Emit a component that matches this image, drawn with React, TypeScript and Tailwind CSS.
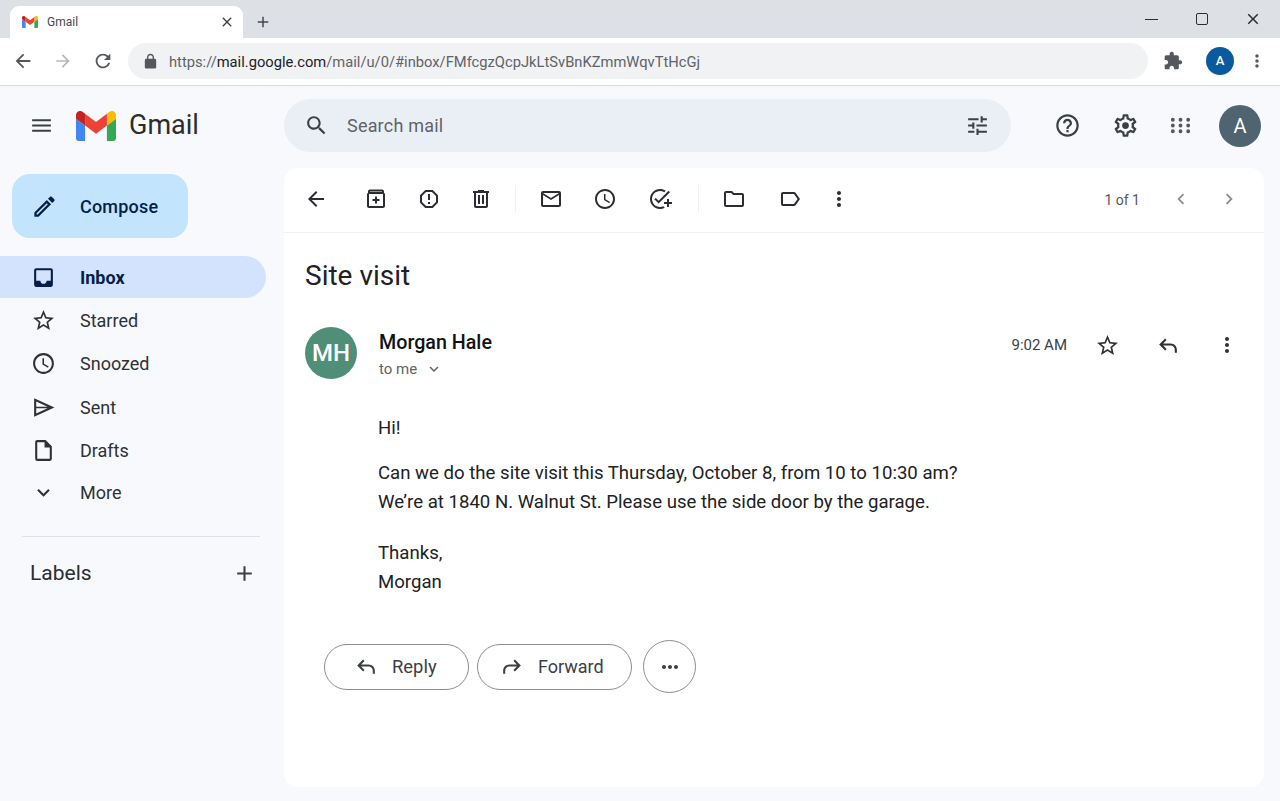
import React from 'react';

const paths = {
  menu: 'M3 18h18v-2H3v2zm0-5h18v-2H3v2zm0-7v2h18V6H3z',
  back: 'M20 11H7.83l5.59-5.59L12 4l-8 8 8 8 1.41-1.41L7.83 13H20v-2z',
  forward: 'M12 4l-1.41 1.41L16.17 11H4v2h12.17l-5.58 5.59L12 20l8-8z',
  refresh: 'M17.65 6.35C16.2 4.9 14.21 4 12 4c-4.42 0-7.99 3.58-7.99 8s3.57 8 7.99 8c3.73 0 6.84-2.55 7.73-6h-2.08c-.82 2.33-3.04 4-5.65 4-3.31 0-6-2.69-6-6s2.69-6 6-6c1.66 0 3.14.69 4.22 1.78L13 11h7V4l-2.35 2.35z',
  lock: 'M18 8h-1V6c0-2.76-2.24-5-5-5S7 3.24 7 6v2H6c-1.1 0-2 .9-2 2v10c0 1.1.9 2 2 2h12c1.1 0 2-.9 2-2V10c0-1.1-.9-2-2-2zM9 8V6c0-1.66 1.34-3 3-3s3 1.34 3 3v2H9z',
  puzzle: 'M20.5 11H19V7c0-1.1-.9-2-2-2h-4V3.5C13 2.12 11.88 1 10.5 1S8 2.12 8 3.5V5H4c-1.1 0-1.99.9-1.99 2v3.8H3.5c1.49 0 2.7 1.21 2.7 2.7s-1.21 2.7-2.7 2.7H2V20c0 1.1.9 2 2 2h3.8v-1.5c0-1.49 1.21-2.7 2.7-2.7 1.49 0 2.7 1.21 2.7 2.7V22H17c1.1 0 2-.9 2-2v-4h1.5c1.38 0 2.5-1.12 2.5-2.5S21.88 11 20.5 11z',
  moreVert: 'M12 8c1.1 0 2-.9 2-2s-.9-2-2-2-2 .9-2 2 .9 2 2 2zm0 2c-1.1 0-2 .9-2 2s.9 2 2 2 2-.9 2-2-.9-2-2-2zm0 6c-1.1 0-2 .9-2 2s.9 2 2 2 2-.9 2-2-.9-2-2-2z',
  close: 'M19 6.41L17.59 5 12 10.59 6.41 5 5 6.41 10.59 12 5 17.59 6.41 19 12 13.41 17.59 19 19 17.59 13.41 12z',
  add: 'M19 13h-6v6h-2v-6H5v-2h6V5h2v6h6v2z',
  search: 'M15.5 14h-.79l-.28-.27C15.41 12.59 16 11.11 16 9.5 16 5.91 13.09 3 9.5 3S3 5.91 3 9.5 5.91 16 9.5 16c1.61 0 3.09-.59 4.23-1.57l.27.28v.79l5 4.99L20.49 19l-4.99-5zm-6 0C7.01 14 5 11.99 5 9.5S7.01 5 9.5 5 14 7.01 14 9.5 11.99 14 9.5 14z',
  tune: 'M3 17v2h6v-2H3zM3 5v2h10V5H3zm10 16v-2h8v-2h-8v-2h-2v6h2zM7 9v2H3v2h4v2h2V9H7zm14 4v-2H11v2h10zm-6-4h2V7h4V5h-4V3h-2v6z',
  help: 'M11 18h2v-2h-2v2zm1-16C6.48 2 2 6.48 2 12s4.48 10 10 10 10-4.48 10-10S17.52 2 12 2zm0 18c-4.41 0-8-3.59-8-8s3.59-8 8-8 8 3.59 8 8-3.59 8-8 8zm0-14c-2.21 0-4 1.79-4 4h2c0-1.1.9-2 2-2s2 .9 2 2c0 2-3 1.75-3 5h2c0-2.25 3-2.5 3-5 0-2.21-1.79-4-4-4z',
  settings: 'M19.43 12.98c.04-.32.07-.64.07-.98 0-.34-.03-.66-.07-.98l2.11-1.65c.19-.15.24-.42.12-.64l-2-3.46c-.09-.16-.26-.25-.44-.25-.06 0-.12.01-.17.03l-2.49 1c-.52-.4-1.08-.73-1.69-.98l-.38-2.65C14.46 2.18 14.25 2 14 2h-4c-.25 0-.46.18-.49.42l-.38 2.65c-.61.25-1.17.59-1.69.98l-2.49-1c-.06-.02-.12-.03-.18-.03-.17 0-.34.09-.43.25l-2 3.46c-.13.22-.07.49.12.64l2.11 1.65c-.04.32-.07.65-.07.98 0 .33.03.66.07.98l-2.11 1.65c-.19.15-.24.42-.12.64l2 3.46c.09.16.26.25.44.25.06 0 .12-.01.17-.03l2.49-1c.52.4 1.08.73 1.69.98l.38 2.65c.03.24.24.42.49.42h4c.25 0 .46-.18.49-.42l.38-2.65c.61-.25 1.17-.59 1.69-.98l2.49 1c.06.02.12.03.18.03.17 0 .34-.09.43-.25l2-3.46c.12-.22.07-.49-.12-.64l-2.11-1.65zm-1.98-1.71c.04.31.05.52.05.73 0 .21-.02.43-.05.73l-.14 1.13.89.7 1.08.84-.7 1.21-1.27-.51-1.04-.42-.9.68c-.43.32-.84.56-1.25.73l-1.06.43-.16 1.13-.2 1.35h-1.4l-.19-1.35-.16-1.13-1.06-.43c-.43-.18-.83-.41-1.23-.71l-.91-.7-1.06.43-1.27.51-.7-1.21 1.08-.84.89-.7-.14-1.13c-.03-.31-.05-.54-.05-.74s.02-.43.05-.73l.14-1.13-.89-.7-1.08-.84.7-1.21 1.27.51 1.04.42.9-.68c.43-.32.84-.56 1.25-.73l1.06-.43.16-1.13.2-1.35h1.39l.19 1.35.16 1.13 1.06.43c.43.18.83.41 1.23.71l.91.7 1.06-.43 1.27-.51.7 1.21-1.07.85-.89.7.14 1.13zM12 9a3 3 0 1 0 0 6 3 3 0 0 0 0-6z',
  apps: 'M4 8a2 2 0 1 0 0-4 2 2 0 0 0 0 4zm8 0a2 2 0 1 0 0-4 2 2 0 0 0 0 4zm8 0a2 2 0 1 0 0-4 2 2 0 0 0 0 4zM4 14a2 2 0 1 0 0-4 2 2 0 0 0 0 4zm8 0a2 2 0 1 0 0-4 2 2 0 0 0 0 4zm8 0a2 2 0 1 0 0-4 2 2 0 0 0 0 4zM4 20a2 2 0 1 0 0-4 2 2 0 0 0 0 4zm8 0a2 2 0 1 0 0-4 2 2 0 0 0 0 4zm8 0a2 2 0 1 0 0-4 2 2 0 0 0 0 4z',
  pencil: 'M3 17.25V21h3.75L17.81 9.94l-3.75-3.75L3 17.25zM5.92 19H5v-.92l9.06-9.06.92.92L5.92 19zM20.71 5.63l-2.34-2.34c-.2-.2-.45-.29-.71-.29s-.51.1-.7.29l-1.83 1.83 3.75 3.75 1.83-1.83c.39-.39.39-1.02 0-1.41z',
  inbox: 'M19 3H4.99c-1.11 0-1.98.89-1.98 2L3 19c0 1.1.88 2 1.99 2H19c1.1 0 2-.9 2-2V5c0-1.11-.9-2-2-2zm0 12h-4c0 1.66-1.35 3-3 3s-3-1.34-3-3H4.99V5H19v10z',
  star: 'M22 9.24l-7.19-.62L12 2 9.19 8.63 2 9.24l5.46 4.73L5.82 21 12 17.27 18.18 21l-1.63-7.03L22 9.24zM12 15.4l-3.76 2.27 1-4.28-3.32-2.88 4.38-.38L12 6.1l1.71 4.04 4.38.38-3.32 2.88 1 4.28L12 15.4z',
  clock: 'M11.99 2C6.47 2 2 6.48 2 12s4.47 10 9.99 10C17.52 22 22 17.52 22 12S17.52 2 11.99 2zM12 20c-4.42 0-8-3.58-8-8s3.58-8 8-8 8 3.58 8 8-3.58 8-8 8zm.5-13H11v6l5.25 3.15.75-1.23-4.5-2.67z',
  send: 'M3 3.200L22.500 12 3 20.800V3.200zM5 6.300V11.200h10.900L5 6.300zM5 12.800v4.900l10.900-4.900H5z',
  draft: 'M14 2H6c-1.1 0-1.99.9-1.99 2L4 20c0 1.1.89 2 1.99 2H18c1.1 0 2-.9 2-2V8l-6-6zM6 20V4h7v5h5v11H6z',
  expand: 'M16.59 8.59L12 13.17 7.41 8.59 6 10l6 6 6-6z',
  archiveAdd: 'M6 2.5h12c1.1 0 2 .9 2 2v1.2c.6.4 1 1 1 1.8V19c0 1.1-.9 2-2 2H5c-1.1 0-2-.9-2-2V7.500c0-.8.400-1.400 1-1.800V4.500c0-1.100.9-2 2-2zm0 2V5h12v-.5H6zM5 7v12h14V7H5zm6 2.500h2V12h2.500v2H13v2.500h-2V14H8.500v-2H11V9.500z',
  report: 'M15.73 3H8.27L3 8.27v7.46L8.27 21h7.46L21 15.73V8.27L15.73 3zM19 14.9L14.9 19H9.1L5 14.9V9.1L9.1 5h5.8L19 9.1v5.8zM11 15h2v2h-2zM11 7h2v6h-2z',
  trash: 'M15 4V3H9v1H4v2h1v13c0 1.1.9 2 2 2h10c1.1 0 2-.9 2-2V6h1V4h-5zm2 15H7V6h10v13zM9 8h2v9H9zm4 0h2v9h-2z',
  mail: 'M20 4H4c-1.1 0-1.99.9-1.99 2L2 18c0 1.1.9 2 2 2h16c1.1 0 2-.9 2-2V6c0-1.1-.9-2-2-2zm0 14H4V8l8 5 8-5v10zm-8-7L4 6h16l-8 5z',
  task: 'M22 5.18L10.59 16.6l-4.24-4.24 1.41-1.41 2.83 2.83 10-10L22 5.18zM12 20c-4.41 0-8-3.59-8-8s3.59-8 8-8c1.57 0 3.04.46 4.28 1.25l1.45-1.45C16.1 2.67 14.13 2 12 2 6.48 2 2 6.48 2 12s4.48 10 10 10c1.73 0 3.36-.44 4.78-1.22l-1.5-1.5c-1 .46-2.11.72-3.28.72zm7-5h-3v2h3v3h2v-3h3v-2h-3v-3h-2v3z',
  folder: 'M20 6h-8l-2-2H4c-1.1 0-1.99.9-1.99 2L2 18c0 1.1.9 2 2 2h16c1.1 0 2-.9 2-2V8c0-1.1-.9-2-2-2zm0 12H4V6h5.17l2 2H20v10z',
  label: 'M17.63 5.84C17.27 5.33 16.67 5 16 5L5 5.01C3.9 5.01 3 5.9 3 7v10c0 1.1.9 1.99 2 1.99L16 19c.67 0 1.27-.33 1.63-.84L22 12l-4.37-6.16zM16 17H5V7h11l3.55 5L16 17z',
  chevronLeft: 'M15.41 7.41L14 6l-6 6 6 6 1.41-1.41L10.83 12z',
  chevronRight: 'M10 6L8.59 7.41 13.17 12l-4.58 4.59L10 18l6-6z',
  reply: 'M9.700 5.300l1.400 1.400L7.830 10H15c3.310 0 6 2.690 6 6v3h-2v-3c0-2.210-1.790-4-4-4H7.830l3.270 3.300-1.400 1.400L4 11l5.700-5.700z',
  forwardArrow: 'M14.300 5.300l-1.400 1.400L16.170 10H9c-3.310 0-6 2.690-6 6v3h2v-3c0-2.210 1.790-4 4-4h7.170l-3.270 3.300 1.400 1.400L20 11l-5.700-5.700z',
  moreHoriz: 'M6 10c-1.100 0-2 .9-2 2s.9 2 2 2 2-.9 2-2-.9-2-2-2zm12 0c-1.100 0-2 .9-2 2s.9 2 2 2 2-.9 2-2-.9-2-2-2zm-6 0c-1.100 0-2 .9-2 2s.9 2 2 2 2-.9 2-2-.9-2-2-2z',
};

type IconName = keyof typeof paths;

const Icon = ({ name, className }: { name: IconName; className?: string }) => (
  <svg viewBox="0 0 24 24" fill="currentColor" fillRule="evenodd" className={`shrink-0 ${className ?? ''}`}>
    <path d={paths[name]} />
  </svg>
);

const GmailLogo = ({ className }: { className?: string }) => (
  <svg viewBox="52 42 88 66" className={`shrink-0 ${className ?? ''}`}>
    <path fill="#4285f4" d="M58 108h14V74L52 59v43c0 3.32 2.69 6 6 6" />
    <path fill="#34a853" d="M120 108h14c3.32 0 6-2.69 6-6V59l-20 15" />
    <path fill="#fbbc04" d="M120 48v26l20-15v-8c0-7.42-8.47-11.65-14.4-7.2" />
    <path fill="#ea4335" d="M72 74V48l24 18 24-18v26L96 92" />
    <path fill="#c5221f" d="M52 51v8l20 15V48l-5.6-4.2c-5.94-4.45-14.4-.22-14.4 7.2" />
  </svg>
);

const navItems: { label: string; icon: IconName; h: string }[] = [
  { label: 'Starred', icon: 'star', h: 'h-[44px]' },
  { label: 'Snoozed', icon: 'clock', h: 'h-[43px]' },
  { label: 'Sent', icon: 'send', h: 'h-[44px]' },
  { label: 'Drafts', icon: 'draft', h: 'h-[43px]' },
  { label: 'More', icon: 'expand', h: 'h-[40px]' },
];

const ToolButton = ({ name, w }: { name: IconName; w: string }) => (
  <div className={`flex justify-center ${w}`}>
    <Icon name={name} className="w-[24px] h-[24px]" />
  </div>
);

export default function App() {
  return (
    <div className="w-[1280px] h-[801px] overflow-hidden flex flex-col font-[Roboto,sans-serif] bg-[#f7f9fc] text-[#202124]">
      {/* tab strip */}
      <div className="h-[38px] bg-[#dde0e5] flex items-end pl-[10px] shrink-0">
        <div className="w-[233px] h-[32px] bg-white rounded-t-[9px] flex items-center pl-[12px] pr-[8px] pb-[1px]">
          <GmailLogo className="w-[16px] h-[12px]" />
          <span className="ml-[9px] text-[12px] text-[#45494e] flex-1">Gmail</span>
          <Icon name="close" className="w-[16px] h-[16px] text-[#3c4043]" />
        </div>
        <div className="h-[32px] flex items-center ml-[11px] pb-[1px]">
          <Icon name="add" className="w-[18px] h-[18px] text-[#45494e]" />
        </div>
        <div className="flex-1" />
        <div className="h-[38px] flex items-center text-[#2b2d30] pr-[18px]">
          <div className="w-[13px] h-px bg-[#2b2d30]" />
          <div className="ml-[38px] w-[12px] h-[12px] border border-[#2b2d30] rounded-[2px]" />
          <Icon name="close" className="ml-[36px] w-[18px] h-[18px]" />
        </div>
      </div>

      {/* browser toolbar */}
      <div className="h-[48px] bg-white border-b border-[#d9dbde] flex items-center shrink-0 pl-[12px] pb-[1px]">
        <Icon name="back" className="w-[22px] h-[22px] text-[#54585d]" />
        <Icon name="forward" className="w-[20px] h-[20px] ml-[19px] text-[#b5b8bc]" />
        <Icon name="refresh" className="w-[22px] h-[22px] ml-[19px] text-[#54585d]" />
        <div className="ml-[14px] w-[1020px] h-[36px] rounded-full bg-[#f0f2f4] flex items-center pl-[14px]">
          <Icon name="lock" className="w-[17px] h-[17px] text-[#54585d]" />
          <span className="ml-[10px] mt-[2px] text-[14.72px] text-[#5f6368]">
            https://<span className="text-[#202124]">mail.google.com</span>/mail/u/0/#inbox/FMfcgzQcpJkLtSvBnKZmmWqvTtHcGj
          </span>
        </div>
        <Icon name="puzzle" className="w-[20px] h-[20px] ml-[15px] text-[#54585d]" />
        <div className="ml-[23px] w-[28px] h-[28px] rounded-full bg-[#0b5a9e] text-white text-[13px] font-medium flex items-center justify-center">A</div>
        <Icon name="moreVert" className="w-[20px] h-[20px] ml-[13px] text-[#54585d]" />
      </div>

      <div className="flex-1 flex min-h-0">
        {/* sidebar */}
        <aside className="w-[284px] shrink-0 flex flex-col">
          <div className="h-[79px] flex items-center pl-[29px]">
            <Icon name="menu" className="w-[25px] h-[25px] text-[#3c4043]" />
            <GmailLogo className="w-[40px] h-[30px] ml-[22px]" />
            <span className="ml-[13px] text-[27px] text-[#2b2d30]">Gmail</span>
          </div>
          <div className="ml-[12px] mt-[9px] w-[176px] h-[64px] rounded-[18px] bg-[#c2e4fc] flex items-center pl-[19px] text-[#041e49]">
            <Icon name="pencil" className="w-[27px] h-[27px]" />
            <span className="ml-[22px] text-[18px] font-medium tracking-[0.2px]">Compose</span>
          </div>
          <div className="mt-[18px] w-[266px] h-[42px] rounded-r-full bg-[#d3e3fd] flex items-center pl-[31px] text-[#041e49]">
            <Icon name="inbox" className="w-[25px] h-[25px]" />
            <span className="ml-[24px] text-[18px] font-bold">Inbox</span>
          </div>
          {navItems.map((item) => (
            <div key={item.label} className={`flex items-center pl-[31px] text-[#2f3134] ${item.h}`}>
              <Icon name={item.icon} className="w-[25px] h-[25px]" />
              <span className="ml-[24px] text-[18px]">{item.label}</span>
            </div>
          ))}
          <div className="mt-[24px] ml-[22px] w-[238px] h-px bg-[#dde2e8]" />
          <div className="mt-[21px] w-[266px] pl-[30px] pr-[9px] flex items-center justify-between">
            <span className="text-[21px] text-[#2b2d30]">Labels</span>
            <Icon name="add" className="w-[25px] h-[25px] text-[#3c4043]" />
          </div>
        </aside>

        <div className="flex-1 min-w-0 flex flex-col">
          {/* search row */}
          <div className="h-[82px] flex items-start pt-[13px] shrink-0">
            <div className="w-[727px] h-[53px] rounded-full bg-[#eaeff6] flex items-center pl-[20px] pr-[21px]">
              <Icon name="search" className="w-[25px] h-[25px] text-[#3c4043]" />
              <span className="ml-[18px] text-[18px] tracking-[0.2px] text-[#5f6368] flex-1">Search mail</span>
              <Icon name="tune" className="w-[25px] h-[25px] text-[#3c4043]" />
            </div>
            <div className="flex items-center h-[53px] ml-[43px]">
              <Icon name="help" className="w-[27px] h-[27px] text-[#3c4043]" />
              <Icon name="settings" className="w-[27px] h-[27px] ml-[31px] text-[#3c4043]" />
              <Icon name="apps" className="w-[23px] h-[23px] ml-[30px] text-[#54585d]" />
              <div className="ml-[27px] w-[42px] h-[42px] rounded-full bg-[#4f6370] text-white text-[20px] flex items-center justify-center">A</div>
            </div>
          </div>

          {/* message card */}
          <main className="w-[980px] h-[619px] bg-white rounded-[14px] flex flex-col">
            <div className="h-[65px] border-b border-[#eef0f2] flex items-center text-[#2b2d30] pb-[3px] shrink-0">
              <ToolButton name="back" w="w-[64px]" />
              <ToolButton name="archiveAdd" w="w-[56px]" />
              <ToolButton name="report" w="w-[50px]" />
              <ToolButton name="trash" w="w-[54px]" />
              <div className="w-px h-[28px] bg-[#f0f1f2] ml-[7px]" />
              <ToolButton name="mail" w="w-[54px] ml-[8px]" />
              <ToolButton name="clock" w="w-[54px]" />
              <ToolButton name="task" w="w-[56px]" />
              <div className="w-px h-[28px] bg-[#f0f1f2] ml-[10px]" />
              <ToolButton name="folder" w="w-[54px] ml-[8px]" />
              <ToolButton name="label" w="w-[58px]" />
              <ToolButton name="moreVert" w="w-[40px]" />
              <div className="flex-1" />
              <span className="text-[14px] text-[#54585d] mt-[3px]">1 of 1</span>
              <Icon name="chevronLeft" className="w-[22px] h-[22px] ml-[30px] mt-[1px] text-[#8a8d91]" />
              <Icon name="chevronRight" className="w-[22px] h-[22px] ml-[26px] mr-[24px] mt-[1px] text-[#8a8d91]" />
            </div>

            <div className="pl-[21px] pr-[26px] flex flex-col">
              <h1 className="mt-[25px] text-[28px] leading-[36px] text-[#202124]">Site visit</h1>
              <div className="mt-[33px] flex items-start">
                <div className="w-[52px] h-[52px] rounded-full bg-[#4f8f78] text-white text-[24px] font-medium flex items-center justify-center">MH</div>
                <div className="ml-[22px] flex-1">
                  <div className="text-[19.7px] font-medium leading-[24px] mt-[4px] text-[#111214]">Morgan Hale</div>
                  <div className="flex items-center mt-[4px] text-[15px] leading-[20px] text-[#5f6368]">
                    to me
                    <Icon name="expand" className="w-[18px] h-[18px] ml-[8px]" />
                  </div>
                </div>
                <div className="flex items-center h-[36px] text-[#2f3134]">
                  <span className="text-[15px] text-[#3c4043]">9:02 AM</span>
                  <Icon name="star" className="w-[25px] h-[25px] ml-[28px]" />
                  <Icon name="reply" className="w-[25px] h-[25px] ml-[35px]" />
                  <Icon name="moreVert" className="w-[24px] h-[24px] ml-[35px] mr-[-1px]" />
                </div>
              </div>

              <div className="ml-[73px] mt-[35px] text-[18.6px] leading-[29px] text-[#202124]">
                <p>Hi!</p>
                <p className="mt-[16px]">
                  Can we do the site visit this Thursday, October 8, from 10 to 10:30 am?
                  <br />
                  We’re at 1840 N. Walnut St. Please use the side door by the garage.
                </p>
                <p className="mt-[22px]">
                  Thanks,
                  <br />
                  Morgan
                </p>
              </div>

              <div className="ml-[19px] mt-[43px] flex items-center text-[#3c4043]">
                <div className="w-[145px] h-[46px] rounded-full border border-[#8a8d91] flex items-center pl-[28px]">
                  <Icon name="reply" className="w-[25px] h-[25px]" />
                  <span className="ml-[14px] text-[18.4px]">Reply</span>
                </div>
                <div className="ml-[8px] w-[155px] h-[46px] rounded-full border border-[#8a8d91] flex items-center pl-[22px]">
                  <Icon name="forwardArrow" className="w-[25px] h-[25px]" />
                  <span className="ml-[13px] text-[18px]">Forward</span>
                </div>
                <div className="ml-[11px] w-[53px] h-[53px] rounded-full border border-[#8a8d91] flex items-center justify-center">
                  <Icon name="moreHoriz" className="w-[24px] h-[24px]" />
                </div>
              </div>
            </div>
          </main>
        </div>
      </div>
    </div>
  );
}
